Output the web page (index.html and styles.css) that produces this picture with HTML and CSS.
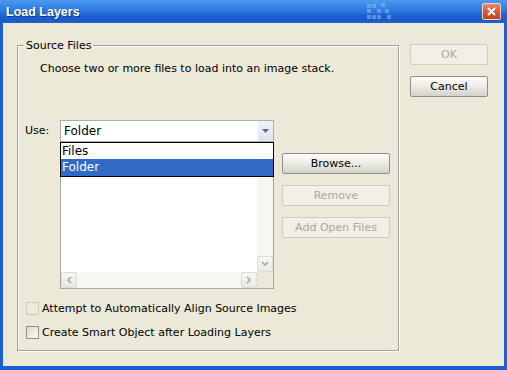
FILE: index.html
```html
<!DOCTYPE html>
<html lang="en">
<head>
  <meta charset="UTF-8" />
  <title>Load Layers</title>
  <link rel="stylesheet" href="styles.css">
</head>
<body>
  <div class="window">
    <div class="titlebar">
      <span class="title">Load Layers</span>
      <svg class="deco" width="26" height="18" viewBox="0 0 26 18">
        <g fill="#8fb8f0" opacity="0.55">
          <rect x="0" y="1" width="4" height="4"/><rect x="5" y="1" width="4" height="4"/><rect x="14" y="0" width="4" height="4"/>
          <rect x="0" y="6" width="4" height="4"/><rect x="10" y="6" width="4" height="4"/><rect x="18" y="6" width="4" height="4"/>
          <rect x="0" y="12" width="4" height="4"/><rect x="5" y="12" width="4" height="4"/><rect x="10" y="12" width="4" height="4"/><rect x="20" y="12" width="4" height="4"/>
        </g>
      </svg>
      <span class="close">
        <svg width="9" height="9" viewBox="0 0 9 9"><path d="M1 1 L8 8 M8 1 L1 8" stroke="#fff" stroke-width="2"/></svg>
      </span>
    </div>

    <div class="client">
      <div class="group">
        <div class="group-title">Source Files</div>
        <p class="desc">Choose two or more files to load into an image stack.</p>

        <div class="use-row">
          <label class="use-label">Use:</label>
          <div class="picker">
            <div class="combo">
              <span class="combo-text">Folder</span>
              <span class="combo-btn">
                <svg width="7" height="4" viewBox="0 0 7 4"><path d="M0 0 H7 L3.5 4 Z" fill="#4d6fa8"/></svg>
              </span>
            </div>
            <div class="listbox">
              <div class="list-area"></div>
              <div class="vscroll">
                <span class="arrow">
                  <svg width="8" height="6" viewBox="0 0 8 6"><path d="M1 1 L4 4 L7 1" fill="none" stroke="#a9a9a2" stroke-width="1.6"/></svg>
                </span>
              </div>
              <div class="hscroll">
                <span class="arrow">
                  <svg width="6" height="8" viewBox="0 0 6 8"><path d="M5 1 L2 4 L5 7" fill="none" stroke="#a9a9a2" stroke-width="1.6"/></svg>
                </span>
                <span class="track"></span>
                <span class="arrow">
                  <svg width="6" height="8" viewBox="0 0 6 8"><path d="M1 1 L4 4 L1 7" fill="none" stroke="#a9a9a2" stroke-width="1.6"/></svg>
                </span>
              </div>
              <div class="corner"></div>
              <ul class="dropdown">
                <li>Files</li>
                <li class="selected">Folder</li>
              </ul>
            </div>
          </div>
          <div class="side-btns">
            <button class="btn">Browse...</button>
            <button class="btn" disabled>Remove</button>
            <button class="btn" disabled>Add Open Files</button>
          </div>
        </div>

        <label class="check disabled"><span class="box"></span>Attempt to Automatically Align Source Images</label>
        <label class="check"><span class="box"></span>Create Smart Object after Loading Layers</label>
      </div>

      <div class="main-btns">
        <button class="btn" disabled>OK</button>
        <button class="btn">Cancel</button>
      </div>
    </div>
  </div>
</body>
</html>
```

FILE: styles.css
```css
body {
  margin: 0;
  font-family: "DejaVu Sans", Verdana, sans-serif;
  font-size: 11px;
  color: #000;
}
.window {
  width: 507px;
  height: 370px;
  display: flex;
  flex-direction: column;
  background: #1d5fd3;
}
.titlebar {
  height: 23px;
  display: flex;
  align-items: center;
  background: linear-gradient(#4f98f0 0, #3d8bec 20%, #2d78e0 48%, #1d60cf 68%, #1a5bc9 90%, #2464d2 100%);
  padding: 0 6px;
}
.title {
  flex: 1;
  color: #fff;
  font-family: "Liberation Sans", Arial, sans-serif;
  font-weight: bold;
  font-size: 12.5px;
  text-shadow: 1px 1px 0 #0d3a8a;
}
.deco {
  margin-right: 89px;
}
.close {
  width: 17px;
  height: 15px;
  border: 1px solid #f3d2c6;
  border-radius: 2px;
  background: linear-gradient(#e88a68, #d2532f 60%, #c4441f);
  display: flex;
  align-items: center;
  justify-content: center;
}
.client {
  flex: 1;
  margin: 0 3px 4px;
  background: #ece9d8;
  display: flex;
  align-items: flex-start;
  padding-top: 21px;
}
.group {
  width: 380px;
  margin: 1px 0 0 14px;
  border: 1px solid #a3a39c;
  box-shadow: inset 1px 1px 0 #fff, 1px 1px 0 #fff;
  padding-bottom: 11px;
}
.group-title {
  margin: -7px 0 0 6px;
  padding: 0 2px;
  width: fit-content;
  line-height: 13px;
  background: #ece9d8;
}
.desc {
  margin: 10px 0 0 22px;
  line-height: 13px;
}
.use-row {
  display: flex;
  margin-top: 45px;
}
.use-label {
  width: 35px;
  padding-left: 7px;
  line-height: 22px;
}
.picker {
  width: 214px;
}
.combo {
  height: 22px;
  box-sizing: border-box;
  border: 1px solid #a7adb5;
  background: #fff;
  display: flex;
  align-items: center;
}
.combo-text {
  flex: 1;
  padding-left: 3px;
  font-size: 12px;
}
.combo-btn {
  width: 15px;
  height: 20px;
  background: linear-gradient(#f0f2f6, #dfe3ea);
  display: flex;
  align-items: center;
  justify-content: center;
}
.listbox {
  position: relative;
  height: 147px;
  box-sizing: border-box;
  border: 1px solid #a7a7a2;
  background: #fff;
  display: grid;
  grid-template-columns: 196px 16px;
  grid-template-rows: 129px 16px;
}
.vscroll {
  background: #f6f6f2;
  display: flex;
  flex-direction: column;
  justify-content: flex-end;
}
.hscroll {
  display: flex;
  background: #f6f6f2;
}
.hscroll .track {
  flex: 1;
}
.arrow {
  width: 16px;
  height: 16px;
  box-sizing: border-box;
  border: 1px solid #dcdcd4;
  border-radius: 2px;
  background: linear-gradient(#f7f7f4, #e9e8e2);
  display: flex;
  align-items: center;
  justify-content: center;
}
.corner {
  background: #ece9d8;
}
.dropdown {
  position: absolute;
  top: -1px;
  left: -1px;
  width: 214px;
  box-sizing: border-box;
  margin: 0;
  padding: 0;
  list-style: none;
  border: 1px solid #000;
  background: #fff;
  font-size: 12px;
}
.dropdown li {
  height: 16px;
  line-height: 16px;
  padding-left: 1px;
}
.dropdown li.selected {
  background: #316ac5;
  color: #fff;
  height: 17px;
}
.side-btns {
  margin-left: 8px;
  padding-top: 33px;
  display: flex;
  flex-direction: column;
  gap: 11px;
}
.btn {
  width: 108px;
  height: 21px;
  padding: 0;
  font-family: inherit;
  font-size: 11px;
  color: #000;
  border: 1px solid #8f8f8a;
  border-radius: 2px;
  background: linear-gradient(#fdfdfb 0, #f0efea 40%, #d3d2ca 100%);
}
.btn:disabled {
  color: #aca899;
  border-color: #cfcdc2;
  background: #f1efe6;
}
.main-btns {
  margin-left: 11px;
  display: flex;
  flex-direction: column;
  gap: 11px;
}
.main-btns .btn {
  width: 78px;
}
.check {
  display: flex;
  align-items: center;
  height: 14px;
  margin: 12px 0 0 8px;
}
.check + .check {
  margin-top: 10px;
}
.check .box {
  width: 13px;
  height: 13px;
  box-sizing: border-box;
  border: 1px solid #8f8f8a;
  background: linear-gradient(135deg, #dcdbd3, #fbfbf9);
  margin-right: 3px;
}
.check.disabled .box {
  border-color: #cdcbc0;
  background: #ece9d8;
}
```
